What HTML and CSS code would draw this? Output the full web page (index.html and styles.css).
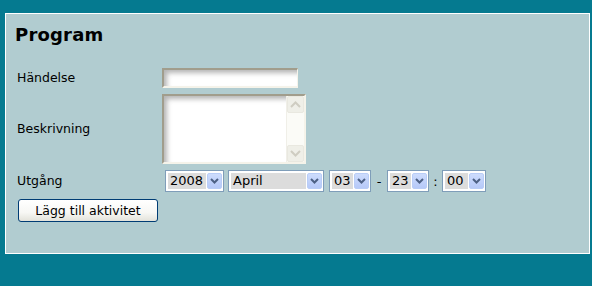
FILE: index.html
```html
<!DOCTYPE html>
<html lang="sv">
<head>
<meta charset="utf-8">
<link rel="stylesheet" href="styles.css">
</head>
<body>
<div class="panel">
  <h1 class="title">Program</h1>
  <div class="form">
    <div class="label lbl-event">Händelse</div>
    <div class="field"><div class="bevel input-box"><input class="text-input" type="text"></div></div>

    <div class="label lbl-desc">Beskrivning</div>
    <div class="field">
      <div class="bevel area-box">
        <textarea class="text-area"></textarea>
        <div class="scrollbar">
          <div class="sb-btn"><svg width="11" height="7" viewBox="0 0 11 7"><path d="M1 6 L5.5 1.5 L10 6" fill="none" stroke="#cfcdc2" stroke-width="2"/></svg></div>
          <div class="sb-track"></div>
          <div class="sb-btn"><svg width="11" height="7" viewBox="0 0 11 7"><path d="M1 1 L5.5 5.5 L10 1" fill="none" stroke="#cfcdc2" stroke-width="2"/></svg></div>
        </div>
      </div>
    </div>

    <div class="label lbl-exp">Utgång</div>
    <div class="field selects">
      <div class="sel w-year"><span class="val">2008</span><span class="arr"><svg width="9" height="6" viewBox="0 0 9 6"><path d="M1 1 L4.5 4.5 L8 1" fill="none" stroke="#4d6185" stroke-width="2"/></svg></span></div>
      <div class="sel w-month"><span class="val">April</span><span class="arr"><svg width="9" height="6" viewBox="0 0 9 6"><path d="M1 1 L4.5 4.5 L8 1" fill="none" stroke="#4d6185" stroke-width="2"/></svg></span></div>
      <div class="sel w-num"><span class="val">03</span><span class="arr"><svg width="9" height="6" viewBox="0 0 9 6"><path d="M1 1 L4.5 4.5 L8 1" fill="none" stroke="#4d6185" stroke-width="2"/></svg></span></div>
      <span class="sep sep-dash">-</span>
      <div class="sel w-num"><span class="val">23</span><span class="arr"><svg width="9" height="6" viewBox="0 0 9 6"><path d="M1 1 L4.5 4.5 L8 1" fill="none" stroke="#4d6185" stroke-width="2"/></svg></span></div>
      <span class="sep sep-colon">:</span>
      <div class="sel w-num2"><span class="val">00</span><span class="arr"><svg width="9" height="6" viewBox="0 0 9 6"><path d="M1 1 L4.5 4.5 L8 1" fill="none" stroke="#4d6185" stroke-width="2"/></svg></span></div>
    </div>
  </div>
  <button class="btn" type="button">Lägg till aktivitet</button>
</div>
</body>
</html>
```

FILE: styles.css
```css
html, body {
  margin: 0;
  padding: 0;
}
body {
  background: #057a90;
  width: 592px;
  height: 286px;
  overflow: hidden;
  padding: 13px 2px 0 5px;
  box-sizing: border-box;
  font-family: "DejaVu Sans", Verdana, sans-serif;
  color: #000;
}
.panel {
  background: #b1ccd0;
  border: 1px solid #ffffff;
  height: 241px;
  box-sizing: border-box;
  padding: 11px 0 0 9px;
}
.title {
  margin: 0;
  font-size: 18px;
  font-weight: bold;
  line-height: 20px;
  letter-spacing: 0.2px;
}
.form {
  display: grid;
  grid-template-columns: 145px auto;
  margin-top: 23px;
  margin-left: 2px;
  align-items: center;
  row-gap: 6px;
}
.label {
  font-size: 12.5px;
  line-height: 16px;
}
.field {
  display: flex;
}
.bevel {
  border-style: solid;
  border-width: 2px 1px 2px 2px;
  border-color: #a19d8c #f5f3ea #f5f3ea #a19d8c;
  background: #fff;
  box-shadow: inset 4px 4px 5px -1px rgba(120,120,120,0.55);
}
.input-box {
  width: 133px;
  height: 16px;
}
.text-input {
  border: 0;
  background: transparent;
  width: 100%;
  height: 100%;
  padding: 0;
  outline: none;
}
.area-box {
  width: 140px;
  height: 66px;
  display: flex;
  border-right-width: 2px;
}
.text-area {
  flex: 1;
  border: 0;
  background: transparent;
  resize: none;
  outline: none;
  padding: 0;
  margin: 0;
}
.scrollbar {
  width: 17px;
  display: flex;
  flex-direction: column;
  background: #fbfbf7;
  border-left: 1px solid #f0efe8;
}
.sb-btn {
  height: 17px;
  box-sizing: border-box;
  border: 1px solid #e9e8e0;
  border-radius: 2px;
  background: #efefe8;
  display: flex;
  align-items: center;
  justify-content: center;
}
.sb-track {
  flex: 1;
}
.selects {
  align-items: center;
  margin-left: 3px;
}
.sel {
  display: flex;
  height: 22px;
  box-sizing: border-box;
  border: 1px solid #7f9db9;
  background: #fff;
  padding: 2px 1px 2px 2px;
  gap: 1px;
  font-size: 13px;
}
.val {
  flex: 1;
  background: #dcdcdc;
  line-height: 16px;
  padding-left: 2px;
}
.arr {
  width: 15px;
  height: 16px;
  box-sizing: border-box;
  border: 1px solid #b9cdf7;
  border-radius: 2px;
  background: linear-gradient(#cddcfd, #b6c9f8);
  display: flex;
  align-items: center;
  justify-content: center;
}
.w-year { width: 59px; margin-right: 4px; }
.w-month { width: 96px; margin-right: 5px; }
.w-num { width: 42px; }
.w-num2 { width: 44px; }
.sep {
  font-size: 13px;
  width: 16px;
  text-align: center;
}
.sep-colon { width: 13px; }
.btn {
  display: block;
  margin: 7px 0 0 3px;
  width: 140px;
  height: 23px;
  border: 1px solid #003c74;
  border-radius: 3px;
  background: linear-gradient(#ffffff 0%, #f7f7f4 60%, #e3e2da 100%);
  font-family: "DejaVu Sans", Tahoma, sans-serif;
  font-size: 12.5px;
  color: #000;
  padding: 0;
}
```
